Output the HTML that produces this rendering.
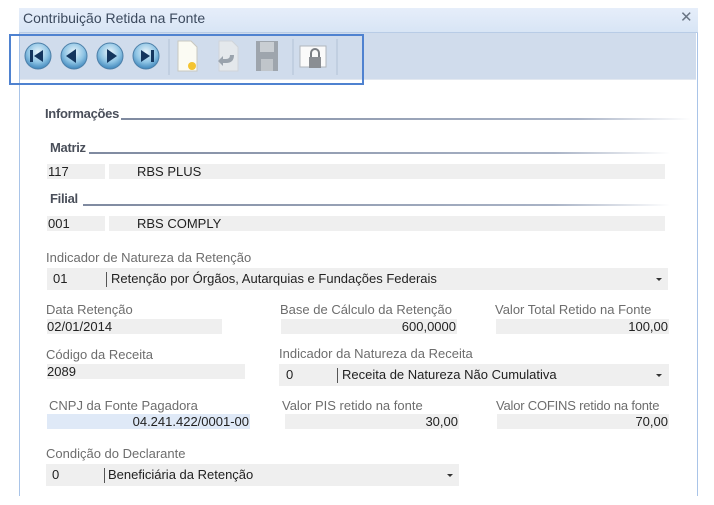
<!DOCTYPE html>
<html><head><meta charset="utf-8"><style>
*{margin:0;padding:0;box-sizing:border-box}
body{width:714px;height:505px;background:#fff;position:relative;overflow:hidden;font-family:"Liberation Sans",sans-serif;font-size:13px;color:#333}
.a{position:absolute;white-space:nowrap}
.lbl{color:#6d6d6d;font-size:13px}
.f{position:absolute;background:#efefef;height:15px;font-size:13px;line-height:15px;color:#222}
.r{text-align:right;padding-right:1px}
.cb{position:absolute;background:#efefef;height:22px;line-height:22px;font-size:13px;color:#222}
.cb .bar{position:absolute;top:4px;width:1px;height:15px;background:#555}
.cb .arr{position:absolute;top:10px;width:0;height:0;border-left:3px solid transparent;border-right:3px solid transparent;border-top:3px solid #333}
.h{position:absolute;font-weight:bold;color:#4a4f5a;font-size:13px;letter-spacing:-0.3px}
.ln{position:absolute;height:2px;background:linear-gradient(90deg,#7f8aa0,#a9b3c6 80%,#fff)}
</style></head><body>
<div class="a" style="left:19px;top:8px;width:679px;height:488px;border-left:1px solid #a9c4e8;border-right:1px solid #a9c4e8"></div>
<div class="a" style="left:19px;top:8px;width:679px;height:25px;background:linear-gradient(#e6eefa,#d8e5f5);border-bottom:1px solid #b8cce6"></div>
<div class="a" style="left:23px;top:10px;font-size:14px;color:#3c4a5e">Contribuição Retida na Fonte</div>
<div class="a" style="left:680px;top:8px;font-size:15px;color:#6a7584">✕</div>
<div class="a" style="left:20px;top:33px;width:676px;height:47px;background:#d0dcec;border-bottom:1px solid #e2e8f0"></div>
<svg class="a" style="left:20px;top:33px" width="340" height="47">
<defs><radialGradient id="g" cx="50%" cy="35%" r="65%"><stop offset="0" stop-color="#e8f4fb"/><stop offset=".6" stop-color="#8ec4e4"/><stop offset="1" stop-color="#3f86bb"/></radialGradient></defs>
<g fill="url(#g)" stroke="#4c7fa8" stroke-width="1">
<circle cx="18" cy="23" r="13"/><circle cx="54" cy="23" r="13"/><circle cx="90" cy="23" r="13"/><circle cx="126" cy="23" r="13"/></g>
<g fill="#14365e">
<rect x="10" y="17" width="3" height="12"/><path d="M14 23l9-6v12z"/>
<path d="M46 23l10-7v14z"/>
<path d="M97 23l-10-7v14z"/>
<path d="M130 23l-9-6v12z"/><rect x="131" y="17" width="3" height="12"/></g>
<g stroke="#b2c2d6"><line x1="149" y1="6" x2="149" y2="42"/><line x1="273" y1="6" x2="273" y2="42"/><line x1="317" y1="6" x2="317" y2="42"/></g>
<path d="M158 8h13l6 6v24h-19z" fill="#fbfbf3" stroke="#c8c8c0"/><circle cx="172" cy="33" r="4" fill="#f4c430"/>
<path d="M199 8h13l6 6v24h-19z" fill="#e4e8ec" stroke="#cfd4da"/><path d="M214 22q0 8-8 8h-3v3l-5-5 5-5v3h3q4 0 4-4z" fill="#9aa3ad"/>
<rect x="236" y="8" width="22" height="30" fill="#9ea5ad"/><rect x="240" y="9" width="14" height="10" fill="#c9ced3"/><rect x="241" y="26" width="12" height="12" fill="#c0c5ca"/>
<rect x="280" y="13" width="26" height="21" fill="#fafafa" stroke="#b0b6bd"/><rect x="289" y="24" width="12" height="11" fill="#8a8e93"/><path d="M291 24v-4a4 4 0 0 1 8 0v4" fill="none" stroke="#7a7e83" stroke-width="2"/>
</svg>
<div class="a" style="left:9px;top:34px;width:355px;height:51px;border:2px solid #4f82d0"></div>

<div class="h" style="left:45px;top:106px">Informações</div>
<div class="ln" style="left:121px;top:118px;width:570px"></div>
<div class="h" style="left:50px;top:140px">Matriz</div>
<div class="ln" style="left:89px;top:152px;width:581px"></div>
<div class="f" style="left:47px;top:164px;width:58px;padding-left:1px">117</div>
<div class="f" style="left:109px;top:164px;width:556px;padding-left:28px">RBS PLUS</div>
<div class="h" style="left:50px;top:191px">Filial</div>
<div class="ln" style="left:83px;top:204px;width:587px"></div>
<div class="f" style="left:47px;top:216px;width:58px;padding-left:1px">001</div>
<div class="f" style="left:109px;top:216px;width:556px;padding-left:28px">RBS COMPLY</div>

<div class="a lbl" style="left:46px;top:250px">Indicador de Natureza da Retenção</div>
<div class="cb" style="left:47px;top:268px;width:621px"><span class="a" style="left:6px">01</span><div class="bar" style="left:59px"></div><span class="a" style="left:64px">Retenção por Órgãos, Autarquias e Fundações Federais</span><div class="arr" style="left:609px"></div></div>

<div class="a lbl" style="left:46px;top:302px">Data Retenção</div>
<div class="f" style="left:47px;top:319px;width:175px">02/01/2014</div>
<div class="a lbl" style="left:280px;top:302px">Base de Cálculo da Retenção</div>
<div class="f r" style="left:281px;top:319px;width:176px">600,0000</div>
<div class="a lbl" style="left:495px;top:302px">Valor Total Retido na Fonte</div>
<div class="f r" style="left:496px;top:319px;width:173px">100,00</div>

<div class="a lbl" style="left:46px;top:347px">Código da Receita</div>
<div class="f" style="left:47px;top:364px;width:198px">2089</div>
<div class="a lbl" style="left:279px;top:346px">Indicador da Natureza da Receita</div>
<div class="cb" style="left:279px;top:364px;width:390px"><span class="a" style="left:7px">0</span><div class="bar" style="left:58px"></div><span class="a" style="left:63px">Receita de Natureza Não Cumulativa</span><div class="arr" style="left:377px"></div></div>

<div class="a lbl" style="left:49px;top:398px">CNPJ da Fonte Pagadora</div>
<div class="f r" style="left:47px;top:414px;width:203px;background:#dfe9f7">04.241.422/0001-00</div>
<div class="a lbl" style="left:282px;top:398px">Valor PIS retido na fonte</div>
<div class="f r" style="left:285px;top:414px;width:174px">30,00</div>
<div class="a lbl" style="left:496px;top:398px;letter-spacing:-0.2px">Valor COFINS retido na fonte</div>
<div class="f r" style="left:497px;top:414px;width:172px">70,00</div>

<div class="a lbl" style="left:46px;top:446px">Condição do Declarante</div>
<div class="cb" style="left:46px;top:464px;width:413px"><span class="a" style="left:6px">0</span><div class="bar" style="left:58px"></div><span class="a" style="left:62px">Beneficiária da Retenção</span><div class="arr" style="left:401px"></div></div>
</body></html>
